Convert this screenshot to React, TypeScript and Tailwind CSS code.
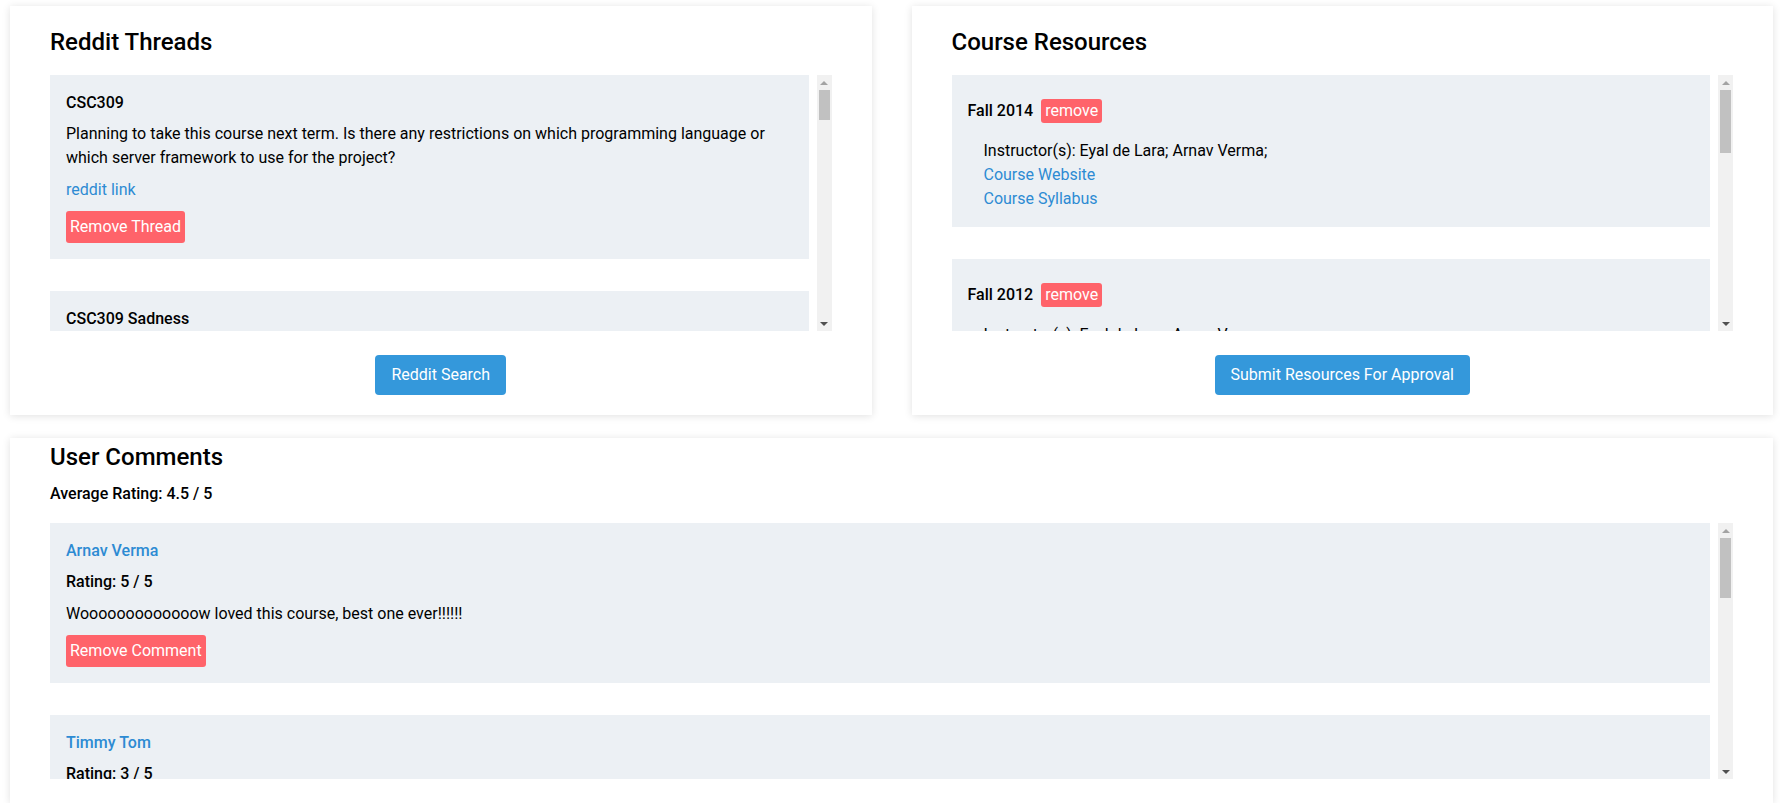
import React from 'react';

const threads = [
  {
    title: 'CSC309',
    body: 'Planning to take this course next term. Is there any restrictions on which programming language or which server framework to use for the project?',
  },
  {
    title: 'CSC309 Sadness',
    body: 'Is anyone else struggling with the last assignment? The deadline feels impossible this year.',
  },
];

const resources = [
  { term: 'Fall 2014', instructors: 'Eyal de Lara; Arnav Verma;' },
  { term: 'Fall 2012', instructors: 'Eyal de Lara; Arnav Verma;' },
];

const comments = [
  { name: 'Arnav Verma', rating: 5, text: 'Wooooooooooooow loved this course, best one ever!!!!!!' },
  { name: 'Timmy Tom', rating: 3, text: 'It was okay, the project took way too much time.' },
];

const Card: React.FC<{ title: string; className?: string; children: React.ReactNode }> = ({ title, className, children }) => (
  <section className={`bg-white shadow-[0_1px_8px_rgba(0,0,0,0.12)] px-10 ${className ?? ''}`}>
    <h2 className="text-2xl font-medium text-black">{title}</h2>
    {children}
  </section>
);

// classic scrollbar look, scrolled to the top
const ScrollBar: React.FC<{ thumb: number }> = ({ thumb }) => (
  <div className="w-[15px] shrink-0 bg-[#f1f1f1] flex flex-col">
    <div className="h-[15px] flex items-center justify-center">
      <div className="w-0 h-0 border-x-[4px] border-x-transparent border-b-[4px] border-b-[#a3a3a3]" />
    </div>
    <div className="flex-1 px-[2px]">
      <div className="bg-[#c1c1c1]" style={{ height: thumb }} />
    </div>
    <div className="h-[15px] flex items-center justify-center">
      <div className="w-0 h-0 border-x-[4px] border-x-transparent border-t-[4px] border-t-[#505050]" />
    </div>
  </div>
);

const ScrollList: React.FC<{ thumb: number; children: React.ReactNode }> = ({ thumb, children }) => (
  <div className="mt-[17px] h-[256px] flex gap-2">
    <div className="flex-1 overflow-hidden">{children}</div>
    <ScrollBar thumb={thumb} />
  </div>
);

const App: React.FC = () => {
  return (
    <div className="min-h-screen bg-white pt-[6px] pl-[10px] pr-[7px] text-black text-base leading-6 font-['Roboto','Liberation_Sans',sans-serif]">
      <div className="grid grid-cols-2 gap-10">
        {/* Reddit Threads */}
        <Card title="Reddit Threads" className="pt-5 pb-5">
          <ScrollList thumb={30}>
            {threads.map((t) => (
              <div key={t.title} className="bg-[#ecf0f4] p-4 mb-8">
                <h5 className="font-medium mb-[7px]">{t.title}</h5>
                <p className="mb-2">{t.body}</p>
                <a href="#" className="block text-[#2d8bd3]">reddit link</a>
                <button className="mt-[9px] block bg-[#ff636a] text-white rounded-[3px] px-1 py-1">Remove Thread</button>
              </div>
            ))}
          </ScrollList>
          <div className="mt-6 flex justify-center">
            <button className="bg-[#3498db] text-white rounded-[4px] px-4 py-2">Reddit Search</button>
          </div>
        </Card>

        {/* Course Resources */}
        <Card title="Course Resources" className="pt-5 pb-5">
          <ScrollList thumb={63}>
            {resources.map((r) => (
              <div key={r.term} className="bg-[#ecf0f4] p-4 mb-8">
                <div className="mt-2 mb-4 flex items-center gap-2">
                  <span className="font-medium">{r.term}</span>
                  <span className="bg-[#ff636a] text-white rounded-[3px] px-1">remove</span>
                </div>
                <div className="pl-4">
                  <div>Instructor(s): {r.instructors}</div>
                  <a href="#" className="block text-[#2d8bd3]">Course Website</a>
                  <a href="#" className="block text-[#2d8bd3]">Course Syllabus</a>
                </div>
              </div>
            ))}
          </ScrollList>
          <div className="mt-6 flex justify-center">
            <button className="bg-[#3498db] text-white rounded-[4px] px-4 py-2">Submit Resources For Approval</button>
          </div>
        </Card>
      </div>

      {/* User Comments */}
      <Card title="User Comments" className="mt-[23px] pt-[3px] pb-6">
        <p className="mt-[9px] font-medium">Average Rating: 4.5 / 5</p>
        <ScrollList thumb={60}>
          {comments.map((c) => (
            <div key={c.name} className="bg-[#ecf0f4] p-4 mb-8">
              <a href="#" className="block font-medium text-[#2d8bd3] mb-[7px]">{c.name}</a>
              <p className="font-medium mb-2">Rating: {c.rating} / 5</p>
              <p>{c.text}</p>
              <button className="mt-[9px] block bg-[#ff636a] text-white rounded-[3px] px-1 py-1">Remove Comment</button>
            </div>
          ))}
        </ScrollList>
      </Card>
    </div>
  );
};

export default App;
